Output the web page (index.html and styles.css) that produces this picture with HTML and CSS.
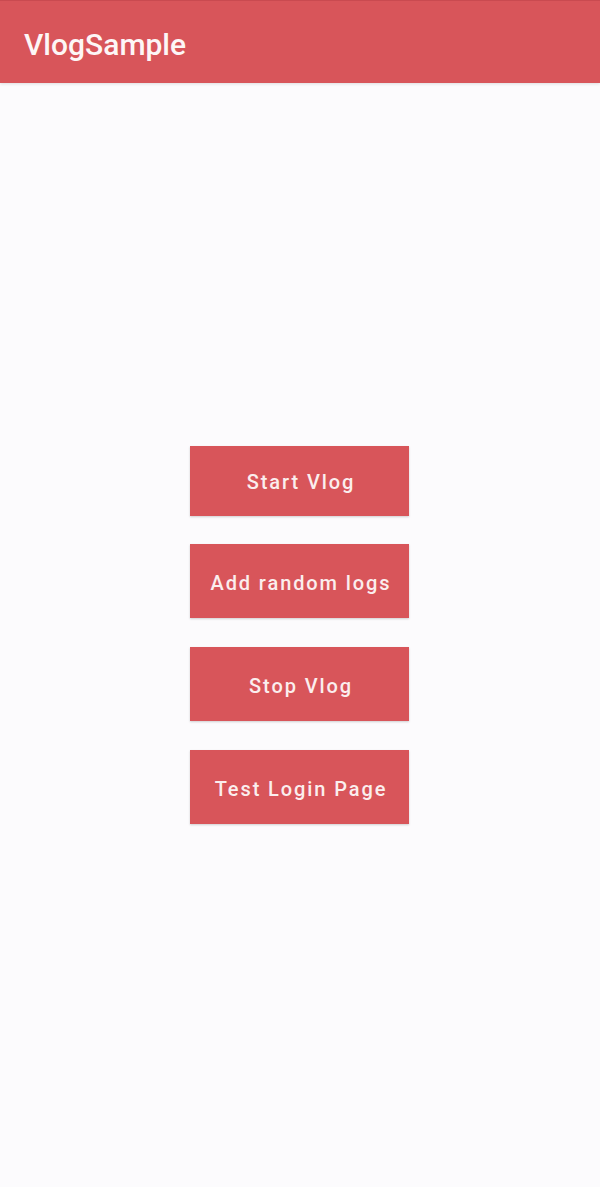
FILE: index.html
```html
<!DOCTYPE html>
<html>
<head>
<meta charset="utf-8">
<link rel="stylesheet" href="styles.css">
</head>
<body>
<header class="appbar"><h1 class="title">VlogSample</h1></header>
<main class="content">
  <button class="btn btn-first">Start Vlog</button>
  <button class="btn">Add random logs</button>
  <button class="btn">Stop Vlog</button>
  <button class="btn">Test Login Page</button>
</main>
</body>
</html>
```

FILE: styles.css
```css
html, body {
  margin: 0;
  padding: 0;
  background: #fcfbfd;
  font-family: Roboto, "Liberation Sans", sans-serif;
}
body {
  height: 1187px;
  overflow: hidden;
}
.appbar {
  height: 83px;
  background: #d8555a;
  border-top: 1px solid #c94a50;
  box-sizing: border-box;
  box-shadow: 0 1px 3px rgba(0,0,0,0.12);
  display: flex;
  align-items: center;
  padding-left: 24px;
}
.title {
  margin: 0;
  color: #fdf6f6;
  font-size: 30px;
  font-weight: 500;
  margin-top: 4px;
}
.content {
  display: flex;
  flex-direction: column;
  align-items: center;
  gap: 29px;
  padding-top: 363px;
}
.btn {
  width: 219px;
  height: 74px;
  border: none;
  background: #d8555a;
  color: #fbeeee;
  font-family: Roboto, "Liberation Sans", sans-serif;
  font-size: 20px;
  font-weight: 500;
  letter-spacing: 1.9px;
  box-shadow: 0 1px 2px rgba(0,0,0,0.18);
  padding: 3px 0 0 3px;
  margin-right: 1px;
}
.btn-first {
  height: 70px;
  margin-bottom: -1px;
  padding-top: 2px;
}
```
